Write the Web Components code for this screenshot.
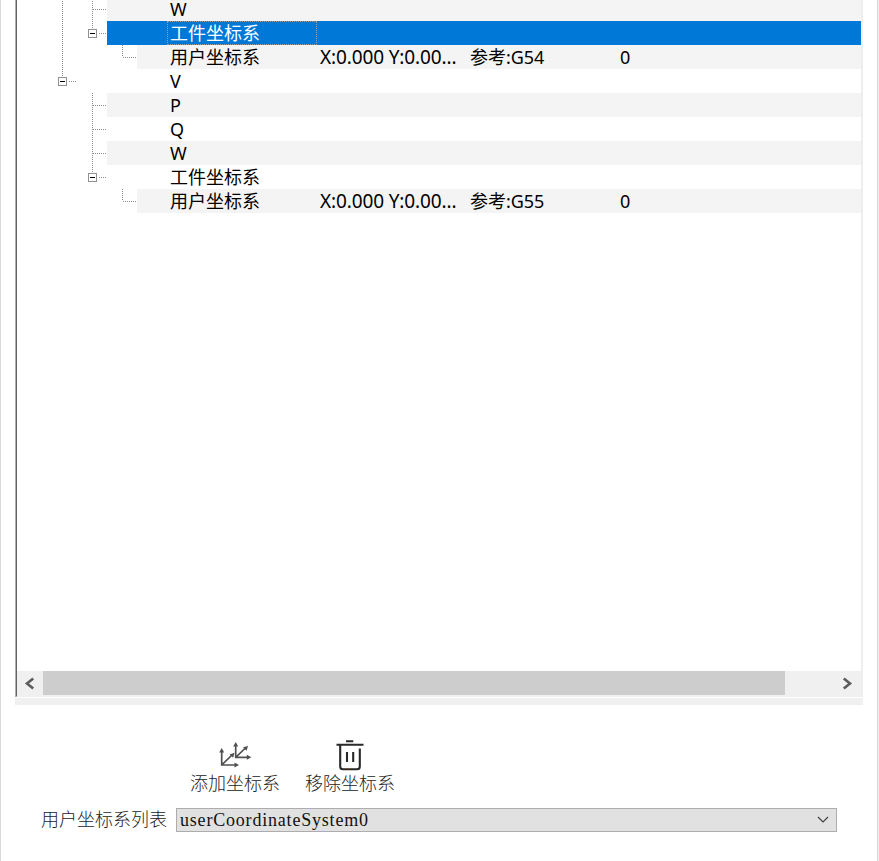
<!DOCTYPE html>
<html lang="zh-CN"><head><meta charset="utf-8"><title>坐标系</title>
<style>html,body{margin:0;height:100%;overflow:hidden;background:#fff}</style></head><body>
<coord-panel></coord-panel>
<script>
class BaseElement extends HTMLElement{
  constructor(){super();this.attachShadow({mode:'open'});}
  connectedCallback(){this.shadowRoot.innerHTML=this.view();}
}
// A dotted connector drawn with one-pixel dots
const dot=(x1,y1,x2,y2)=>`<path d="M${x1} ${y1}L${x2} ${y2}" stroke="#8e8e8e" stroke-dasharray="1 1"/>`;
customElements.define('tree-row',class extends BaseElement{
  view(){
    const lv=+this.getAttribute('level'),x=lv===0?77:lv===1?107:137,cx=x-15;
    const box=this.hasAttribute('open'),last=this.hasAttribute('last');
    let g='';
    if(this.hasAttribute('trunk'))g+=dot(45.5,0,45.5,24);
    g+=dot(cx-16.5,0,cx-16.5,last?12:24)+dot(cx-16,12.5,x-17,12.5);
    if(box)g+=`<path d="M${cx-22} 7h12v11h-12z" fill="#fff"/><path d="M${cx-20.5} 8.5h8v8h-8z" fill="#fff" stroke="#919191"/><path d="M${cx-19} 12.5h5" stroke="#000"/>`;
    return `<style>
    :host{display:flex;height:24px;flex:none;font:18px/24px "Noto Sans","Noto Sans CJK SC",sans-serif;color:#000;white-space:pre}
    svg{flex:none;display:block}
    .fill{flex:1;display:flex;padding-left:${150-(x-17)}px;background:${this.hasAttribute('selected')?'#0078d7':this.hasAttribute('alt')?'#f4f4f4':'#fff'};color:${this.hasAttribute('selected')?'#fff':'#000'}}
    ::slotted(*){flex:none}
    .name{width:150px;height:24px;box-sizing:border-box;padding-left:3px;${this.hasAttribute('selected')?'outline:1px dotted #a0a0a0;outline-offset:-1px':''}}
    </style><svg width="${x-17}" height="24" shape-rendering="crispEdges">${g}</svg><div class="fill"><div class="name"><slot></slot></div><slot name="cells"></slot></div>`;
  }
});
customElements.define('row-cell',class extends BaseElement{
  view(){return `<style>:host{display:block;width:150px;box-sizing:border-box;padding-left:3px;letter-spacing:var(--ls,0);font-size:var(--fs,18px)}</style><slot></slot>`}
});
customElements.define('coord-tree',class extends BaseElement{
  view(){return `<style>
    :host{display:flex;flex-direction:column;height:697px;box-sizing:border-box;border-left:1px solid #b0b0b0;border-right:2px solid #eee;overflow:hidden}
    .body{height:671px;overflow:hidden;box-sizing:border-box;border-left:1px solid #646464;display:flex;flex-direction:column}
    .body>div{margin-top:-3px}
    </style><div class="body"><div><slot></slot></div></div><scroll-bar></scroll-bar>`}
});
customElements.define('scroll-bar',class extends BaseElement{
  view(){return `<style>
    :host{display:flex;height:25px;border-bottom:1px solid #f0f0f0;background:#f0f0f0;border-left:1px solid #646464}
    svg{width:26px;height:25px;flex:none}.track{flex:1}.thumb{height:24px;width:742px;background:#cdcdcd}
    </style><svg viewBox="0 0 26 25"><path d="M16.2 7.500L10 12.500l6.200 5" fill="none" stroke="#5c5c5c" stroke-width="2.600"/></svg><div class="track"><div class="thumb"></div></div><svg viewBox="0 0 26 25"><path d="M8.800 7.500l6.200 5-6.200 5" fill="none" stroke="#5c5c5c" stroke-width="2.600"/></svg>`}
});
customElements.define('tool-button',class extends BaseElement{
  view(){
    const icons={
      add:`<g stroke="#505050" stroke-width="1.700" fill="none"><path d="M6.700 13v14H21M6.700 27L17 17M20.700 7v12.300H33M20.700 19.300L31 9.500"/></g><g fill="#505050"><path d="M4.200 14.500l2.500-4.500 2.500 4.500zM19.500 24.500l4.500 2.500-4.500 2.500zM14.500 16.500l5-1.700-1.400 5zM18.200 8.500l2.500-4.500 2.500 4.500zM31.800 16.800l4.500 2.500-4.500 2.500zM28 9.500l5-1.700-1.400 5z"/></g>`,
      remove:`<g fill="none" stroke="#292929" stroke-width="2.100"><path d="M16 3.200h7.300M6.500 6.700h27M10.200 7v21.400q0 2.800 2.800 2.800h14q2.800 0 2.800-2.800V10.500M17 14v10M23.200 14v10"/></g>`};
    return `<style>
    :host{display:flex;flex-direction:column;align-items:center;width:90px;font:300 18px/22px "Noto Sans CJK SC",sans-serif;color:#222;white-space:nowrap}
    svg{width:40px;height:33px}
    </style><svg viewBox="0 0 40 33">${icons[this.getAttribute('icon')]}</svg><slot></slot>`;
  }
});
customElements.define('combo-box',class extends BaseElement{
  view(){return `<style>
    :host{display:flex;align-items:center;justify-content:space-between;width:661px;height:24px;box-sizing:border-box;border:1px solid #adadad;background:#e1e1e1;padding:0 6px 0 3px;font:18px/22px "Liberation Serif",serif;letter-spacing:.8px;color:#111}
    svg{width:14px;height:10px}
    </style><slot></slot><svg viewBox="0 0 14 10"><path d="M2 2l5 5 5-5" fill="none" stroke="#404040" stroke-width="1.200"/></svg>`}
});
customElements.define('coord-panel',class extends BaseElement{
  view(){return `<style>
    :host{display:flex;flex-direction:column;height:861px;width:879px;box-sizing:border-box;border-left:1px solid #d9d9d9;border-right:1px solid #eee;background:#fff;overflow:hidden}
    .inner{flex:1;border-right:1px solid #d7d7d7;padding-left:14px}
    coord-tree{width:848px}
    .strip{width:848px;height:7px;margin-top:1px;background:#f0f0f0}
    .tools{display:flex;gap:25px;padding:33px 0 0 175px}
    .field{display:flex;align-items:center;height:24px;margin-top:15px;padding-left:26px}
    label{width:135px;padding-bottom:3px;font:300 18px/21px "Noto Sans CJK SC",sans-serif;color:#222}
    </style><div class="inner"><coord-tree>
    <tree-row level="1" trunk alt>W</tree-row>
    <tree-row level="1" trunk open last selected>工件坐标系</tree-row>
    <tree-row level="2" trunk last alt>用户坐标系<row-cell slot="cells" style="--fs:19px;--ls:-.13px">X:0.000 Y:0.00...</row-cell><row-cell slot="cells" style="--ls:-.05px">参考:G54</row-cell><row-cell slot="cells">0</row-cell></tree-row>
    <tree-row level="0" open last>V</tree-row>
    <tree-row level="1" alt>P</tree-row>
    <tree-row level="1">Q</tree-row>
    <tree-row level="1" alt>W</tree-row>
    <tree-row level="1" open last>工件坐标系</tree-row>
    <tree-row level="2" last alt>用户坐标系<row-cell slot="cells" style="--fs:19px;--ls:-.13px">X:0.000 Y:0.00...</row-cell><row-cell slot="cells" style="--ls:-.05px">参考:G55</row-cell><row-cell slot="cells">0</row-cell></tree-row>
    </coord-tree><div class="strip"></div>
    <div class="tools"><tool-button icon="add">添加坐标系</tool-button><tool-button icon="remove">移除坐标系</tool-button></div>
    <div class="field"><label>用户坐标系列表</label><combo-box>userCoordinateSystem0</combo-box></div></div>`}
});
</script></body></html>
